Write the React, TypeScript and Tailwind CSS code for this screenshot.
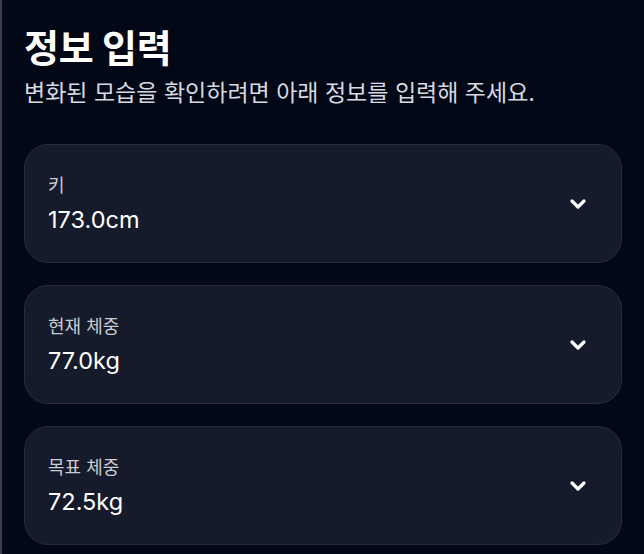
import { ChevronDown } from "lucide-react";

export default function App() {
  const fields = [
    { label: "키", value: "173.0cm" },
    { label: "현재 체중", value: "77.0kg" },
    { label: "목표 체중", value: "72.5kg" },
  ];

  return (
    <div
      className="min-h-[554px] w-[644px] bg-[#030817] border-l-2 border-[#3a3f4b] pl-[22px] pr-[22px] pt-[22px] text-white"
      style={{ fontFamily: 'Inter, "Noto Sans CJK KR", sans-serif' }}
    >
      {/* Header */}
      <h1 className="text-[38px] font-bold leading-[52px] tracking-[-0.3px]">정보 입력</h1>
      <p className="text-[23px] leading-[32px] text-[#d7dae0] mt-[3px]">
        변화된 모습을 확인하려면 아래 정보를 입력해 주세요.
      </p>

      {/* Fields */}
      <div className="mt-[35px] flex flex-col gap-[22px]">
        {fields.map((f) => (
          <div
            key={f.label}
            className="h-[119px] rounded-[24px] bg-[#151b2b] border border-[#252c3c] pl-[23px] pr-[31px] flex items-center justify-between"
          >
            <div className="flex flex-col pt-[2px]">
              <span className="text-[18px] leading-[24px] text-[#c9ccd3]">{f.label}</span>
              <span className="text-[23.5px] leading-[32px] text-white mt-[6px]">{f.value}</span>
            </div>
            <ChevronDown className="w-[24px] h-[24px] text-white" strokeWidth={3.2} />
          </div>
        ))}
      </div>
    </div>
  );
}
